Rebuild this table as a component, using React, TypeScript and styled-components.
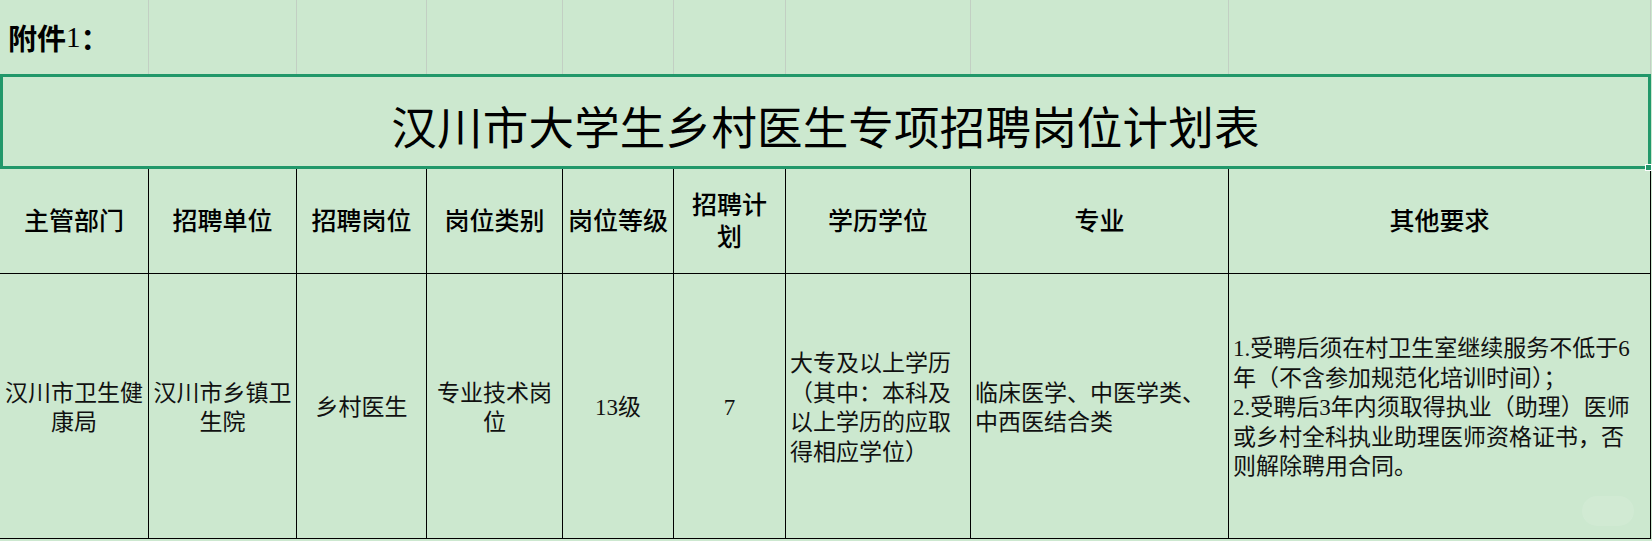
import React from 'react';
import styled, { createGlobalStyle } from 'styled-components';

const GlobalStyle = createGlobalStyle`
  html, body {
    margin: 0;
    padding: 0;
    background: #cce8cf;
    overflow: hidden;
  }
`;

const SANS = `"Liberation Sans", "Noto Sans CJK SC", sans-serif`;
const SERIF = `"Liberation Serif", "Noto Sans CJK SC", serif`;

const Sheet = styled.div`
  display: grid;
  grid-template-columns: 149px 148px 130px 136px 111px 112px 185px 258px 422px;
  grid-template-rows: 74px 95px 105px 265px;
  width: 1652px;
  height: 541px;
  background: #cce8cf;
  color: #000;
`;

const TopCell = styled.div`
  border-right: 1px solid #c2cfc3;
  box-sizing: border-box;
  display: flex;
  align-items: center;
  padding-left: 8px;
  font-family: ${SANS};
  font-size: 29px;
  font-weight: 700;
  white-space: nowrap;
`;

const AttachNo = styled.span`
  font-family: ${SERIF};
  font-weight: 400;
`;

const TitleCell = styled.div`
  grid-column: 1 / -1;
  position: relative;
  box-sizing: border-box;
  border: 3px solid #21986a;
  display: flex;
  align-items: center;
  justify-content: center;
  padding-top: 6px;
  font-family: ${SANS};
  font-size: 45.5px;
  font-weight: 400;
  letter-spacing: 0.2px;
`;

const FillHandle = styled.span`
  position: absolute;
  right: -4px;
  bottom: -5px;
  width: 5px;
  height: 5px;
  background: #21986a;
  border: 1px solid #ffffff;
`;

const HeadCell = styled.div`
  box-sizing: border-box;
  border-right: 1px solid #000;
  border-bottom: 1px solid #000;
  display: flex;
  flex-direction: column;
  align-items: center;
  justify-content: center;
  font-family: ${SANS};
  font-size: 25px;
  font-weight: 500;
  line-height: 32px;
  white-space: nowrap;
`;

const BodyCell = styled.div<{ $align?: 'left' | 'center' }>`
  position: relative;
  box-sizing: border-box;
  border-right: 1px solid #000;
  border-bottom: 1px solid #000;
  display: flex;
  flex-direction: column;
  justify-content: center;
  align-items: ${(p) => (p.$align === 'left' ? 'flex-start' : 'center')};
  padding-left: ${(p) => (p.$align === 'left' ? '4px' : '0')};
  padding-top: 4px;
  font-family: ${SERIF};
  font-size: 23px;
  line-height: 29.5px;
  white-space: nowrap;
  color: #111;
`;

const Line = styled.span`
  display: block;
`;

const Watermark = styled.span`
  position: absolute;
  right: 16px;
  bottom: 12px;
  width: 52px;
  height: 30px;
  border-radius: 15px;
  background: rgba(255, 255, 255, 0.1);
`;

const headers: string[][] = [
  ['主管部门'],
  ['招聘单位'],
  ['招聘岗位'],
  ['岗位类别'],
  ['岗位等级'],
  ['招聘计', '划'],
  ['学历学位'],
  ['专业'],
  ['其他要求'],
];

type Row = { lines: string[]; align: 'left' | 'center' };

const body: Row[] = [
  { lines: ['汉川市卫生健', '康局'], align: 'center' },
  { lines: ['汉川市乡镇卫', '生院'], align: 'center' },
  { lines: ['乡村医生'], align: 'center' },
  { lines: ['专业技术岗', '位'], align: 'center' },
  { lines: ['13级'], align: 'center' },
  { lines: ['7'], align: 'center' },
  {
    lines: ['大专及以上学历', '（其中：本科及', '以上学历的应取', '得相应学位）'],
    align: 'left',
  },
  { lines: ['临床医学、中医学类、', '中西医结合类'], align: 'left' },
  {
    lines: [
      '1.受聘后须在村卫生室继续服务不低于6',
      '年（不含参加规范化培训时间）；',
      '2.受聘后3年内须取得执业（助理）医师',
      '或乡村全科执业助理医师资格证书，否',
      '则解除聘用合同。',
    ],
    align: 'left',
  },
];

const App = () => {
  return (
    <>
      <GlobalStyle />
      <Sheet>
        {/* 顶部一行：附件 */}
        <TopCell>
          附件<AttachNo>1</AttachNo>：
        </TopCell>
        {Array.from({ length: 8 }).map((_, i) => (
          <TopCell key={i} />
        ))}

        {/* 标题 */}
        <TitleCell>
          汉川市大学生乡村医生专项招聘岗位计划表
          <FillHandle />
        </TitleCell>

        {/* 表头 */}
        {headers.map((h, i) => (
          <HeadCell key={i}>
            {h.map((t, j) => (
              <Line key={j}>{t}</Line>
            ))}
          </HeadCell>
        ))}

        {/* 内容 */}
        {body.map((cell, i) => (
          <BodyCell key={i} $align={cell.align}>
            {cell.lines.map((t, j) => (
              <Line key={j}>{t}</Line>
            ))}
            {i === body.length - 1 && <Watermark />}
          </BodyCell>
        ))}
      </Sheet>
    </>
  );
};

export default App;
